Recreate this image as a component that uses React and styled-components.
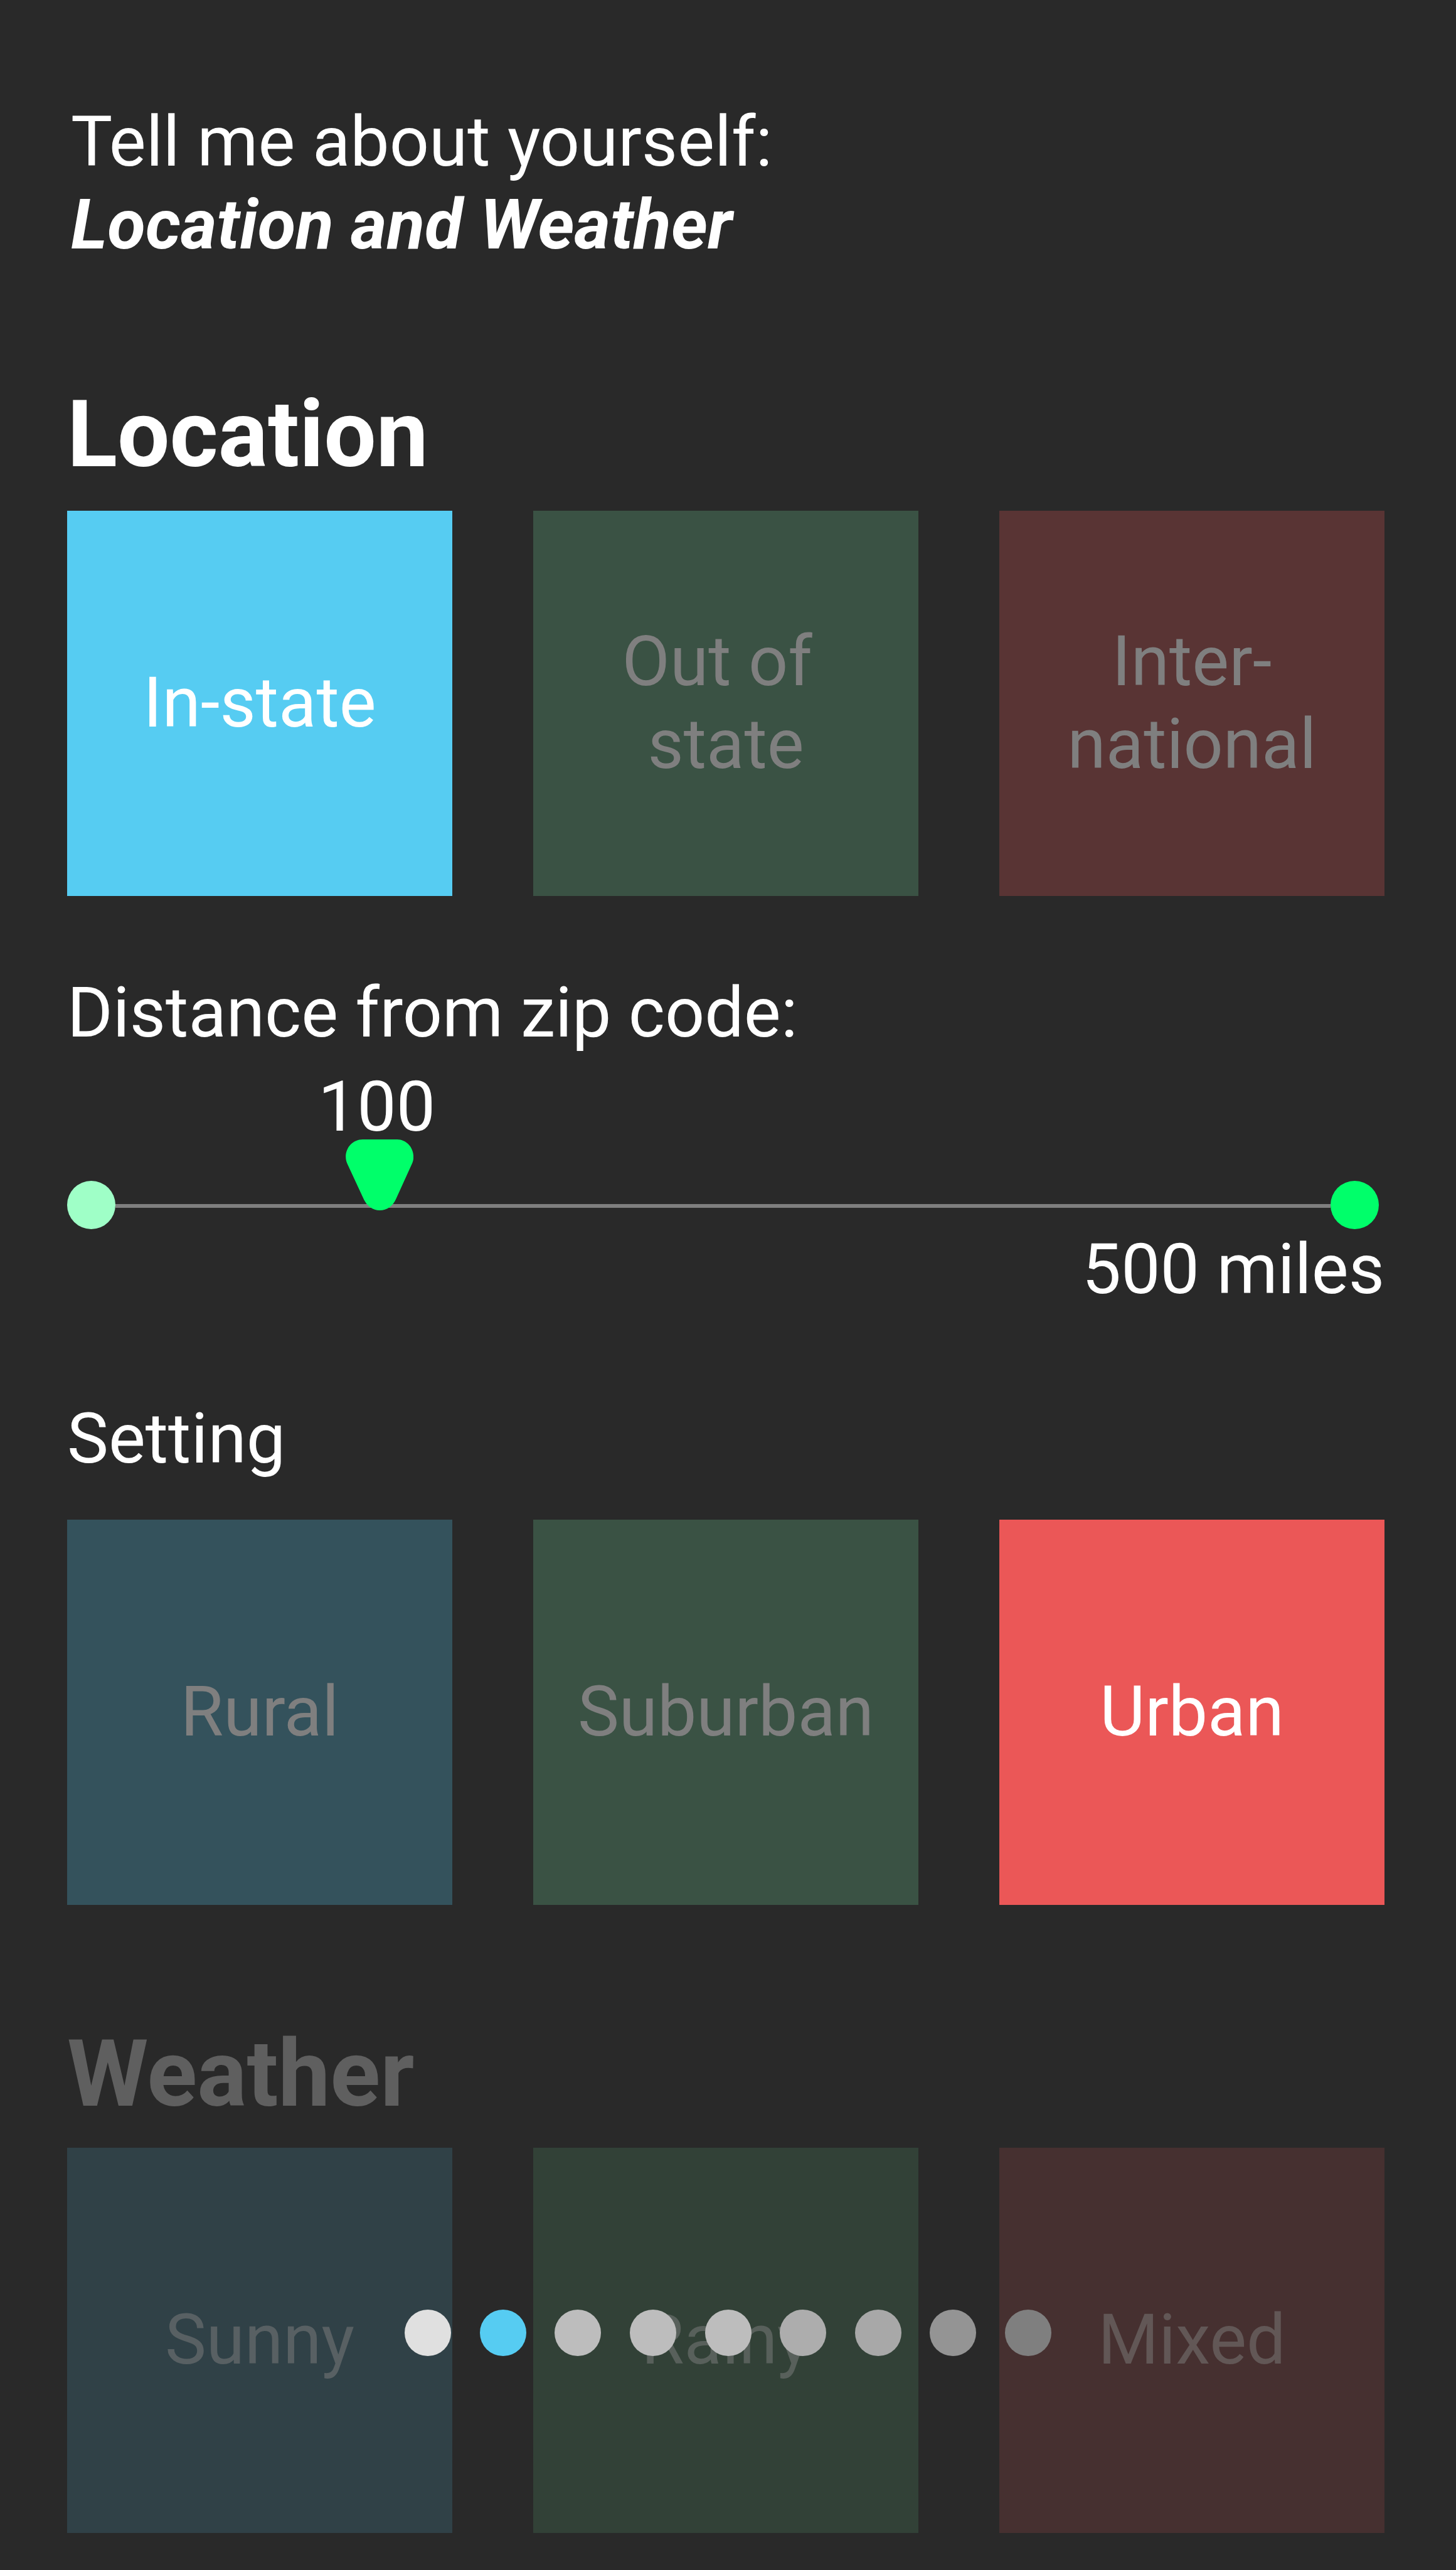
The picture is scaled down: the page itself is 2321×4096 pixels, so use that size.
import React, { useState } from "react";
import styled, { createGlobalStyle } from "styled-components";

const GlobalStyle = createGlobalStyle`
  *, *::before, *::after { box-sizing: border-box; }
  body { margin: 0; background: #292929; }
  button, input { font: inherit; color: inherit; }
`;

const Page = styled.main`
  position: relative;
  display: flex;
  flex-direction: column;
  min-height: 100vh;
  padding: 160px 114px 59px 107px;
  background: #292929;
  color: #ffffff;
  font-family: Roboto, sans-serif;
  font-size: 111px;
  line-height: 132px;
`;

const Intro = styled.h1`
  margin: 0;
  padding-left: 6px;
  font-size: 111px;
  font-weight: 400;
`;

const Topic = styled.em`
  display: block;
  font-weight: 700;
`;

const Section = styled.section`
  display: flex;
  flex-direction: column;
  gap: ${(p) => p.$gap}px;
  margin-top: ${(p) => p.$space}px;
`;

const SectionTitle = styled.h2`
  margin: 0;
  font-size: 148px;
  line-height: 172px;
  font-weight: 700;
  color: ${(p) => (p.$muted ? "#5f5f5f" : "#ffffff")};
`;

const Subtitle = styled.h3`
  margin: 0;
  font-size: 111px;
  font-weight: 400;
`;

const Tiles = styled.div`
  display: grid;
  grid-template-columns: repeat(3, 1fr);
  gap: 129px;
`;

const Tile = styled.button`
  display: flex;
  align-items: center;
  justify-content: center;
  aspect-ratio: 1;
  min-width: 0;
  padding: 0 0 2px;
  border: 0;
  background: ${(p) => p.$fill};
  color: ${(p) => p.$ink};
  text-align: center;
  white-space: pre;
  cursor: pointer;
`;

const Distance = styled.div`
  display: flex;
  flex-direction: column;
  margin-top: 120px;
`;

const DistanceValue = styled.output`
  align-self: flex-start;
  margin-top: 32px;
  line-height: 104px;
`;

const SliderBox = styled.div`
  position: relative;
  display: flex;
  align-items: flex-end;
  height: 143px;
  margin-right: 9px;
`;

const EndDot = styled.span`
  flex: none;
  width: 77px;
  height: 77px;
  border-radius: 50%;
  background: ${(p) => p.$fill};
`;

const Rail = styled.span`
  flex: 1;
  height: 6px;
  margin-bottom: 34px;
  background: #7f7f7f;
`;

const markerShape =
  'path("M27 0H82C96 0 108 12 108 28C108 32 107 36 105 40L80 95C75 106 66 113 54 113C43 113 34 106 29 96L3 40C1 36 0 32 0 28C0 12 12 0 27 0Z")';

const Slider = styled.input`
  position: absolute;
  inset: 0;
  width: 100%;
  height: 113px;
  margin: 0;
  background: transparent;
  appearance: none;
  cursor: pointer;

  &::-webkit-slider-runnable-track {
    height: 113px;
    background: transparent;
  }

  &::-webkit-slider-thumb {
    appearance: none;
    width: 108px;
    height: 113px;
    border: 0;
    background: #00ff6a;
    clip-path: ${markerShape};
  }
`;

const MaxLabel = styled.span`
  align-self: flex-end;
  margin-top: 12px;
  line-height: 104px;
`;

const Steps = styled.nav`
  position: absolute;
  left: 0;
  right: 0;
  bottom: 341px;
  display: flex;
  justify-content: space-between;
  width: 1031px;
  margin: 0 auto;
`;

const Step = styled.button`
  width: 74px;
  height: 74px;
  padding: 0;
  border: 0;
  border-radius: 50%;
  background: ${(p) => p.$fill};
  cursor: pointer;
`;

const bright = { blue: "#56ccf2", green: "#6fcf97", red: "#eb5757" };
const dim = { blue: "#34525c", green: "#3a5244", red: "#593434" };
const faint = { blue: "#304147", green: "#324137", red: "#463030" };
const faintInk = { blue: "#586063", green: "#58605b", red: "#625756" };

const locations = [
  { label: "In-state", tone: "blue" },
  { label: "Out of \nstate", tone: "green" },
  { label: "Inter-\nnational", tone: "red" },
];
const settings = [
  { label: "Rural", tone: "blue" },
  { label: "Suburban", tone: "green" },
  { label: "Urban", tone: "red" },
];
const weathers = [
  { label: "Sunny", tone: "blue" },
  { label: "Rainy", tone: "green" },
  { label: "Mixed", tone: "red" },
];
const steps = [
  "#e0e0e0", "#56ccf2", "#bdbdbd", "#bdbdbd", "#bdbdbd",
  "#adadad", "#a8a8a8", "#949494", "#7f7f7f",
];

function Choices({ options, value, onChange, label }) {
  return (
    <Tiles role="group" aria-label={label}>
      {options.map((o) => {
        const on = value === o.label;
        const idle = value === null;
        return (
          <Tile
            key={o.label}
            type="button"
            aria-pressed={on}
            $fill={(on ? bright : idle ? faint : dim)[o.tone]}
            $ink={on ? "#ffffff" : idle ? faintInk[o.tone] : "#7f7f7f"}
            onClick={() => onChange(o.label)}
          >
            {o.label}
          </Tile>
        );
      })}
    </Tiles>
  );
}

export default function App() {
  const [location, setLocation] = useState("In-state");
  const [setting, setSetting] = useState("Urban");
  const [weather, setWeather] = useState(null);
  const [position, setPosition] = useState(112);

  // The readout snaps to the nearest 25 miles while the marker moves freely.
  const miles = Math.round((position - 1) / 25) * 25;

  return (
    <>
      <GlobalStyle />
      <Page>
        <Intro>
          Tell me about yourself:
          <Topic>Location and Weather</Topic>
        </Intro>

        <Section $space={183} $gap={35}>
          <SectionTitle>Location</SectionTitle>
          <Choices label="Location" options={locations} value={location} onChange={setLocation} />
        </Section>

        <Distance>
          <label htmlFor="distance">Distance from zip code:</label>
          <DistanceValue
            htmlFor="distance"
            style={{ marginLeft: `calc((100% - 118px) * ${position / 500} - 44px)` }}
          >
            {miles}
          </DistanceValue>
          <SliderBox>
            <EndDot $fill="#9fffc7" />
            <Rail />
            <EndDot $fill="#00ff6a" />
            <Slider
              id="distance"
              type="range"
              min="0"
              max="500"
              value={position}
              onChange={(e) => setPosition(Number(e.target.value))}
            />
          </SliderBox>
          <MaxLabel>500 miles</MaxLabel>
        </Distance>

        <Section $space={152} $gap={63}>
          <Subtitle>Setting</Subtitle>
          <Choices label="Setting" options={settings} value={setting} onChange={setSetting} />
        </Section>

        <Section $space={184} $gap={31}>
          <SectionTitle $muted={weather === null}>Weather</SectionTitle>
          <Choices label="Weather" options={weathers} value={weather} onChange={setWeather} />
        </Section>

        <Steps aria-label="Progress">
          {steps.map((fill, i) => (
            <Step
              key={i}
              type="button"
              aria-label={`Step ${i + 1}`}
              aria-current={i === 1 ? "step" : undefined}
              $fill={fill}
            />
          ))}
        </Steps>
      </Page>
    </>
  );
}
